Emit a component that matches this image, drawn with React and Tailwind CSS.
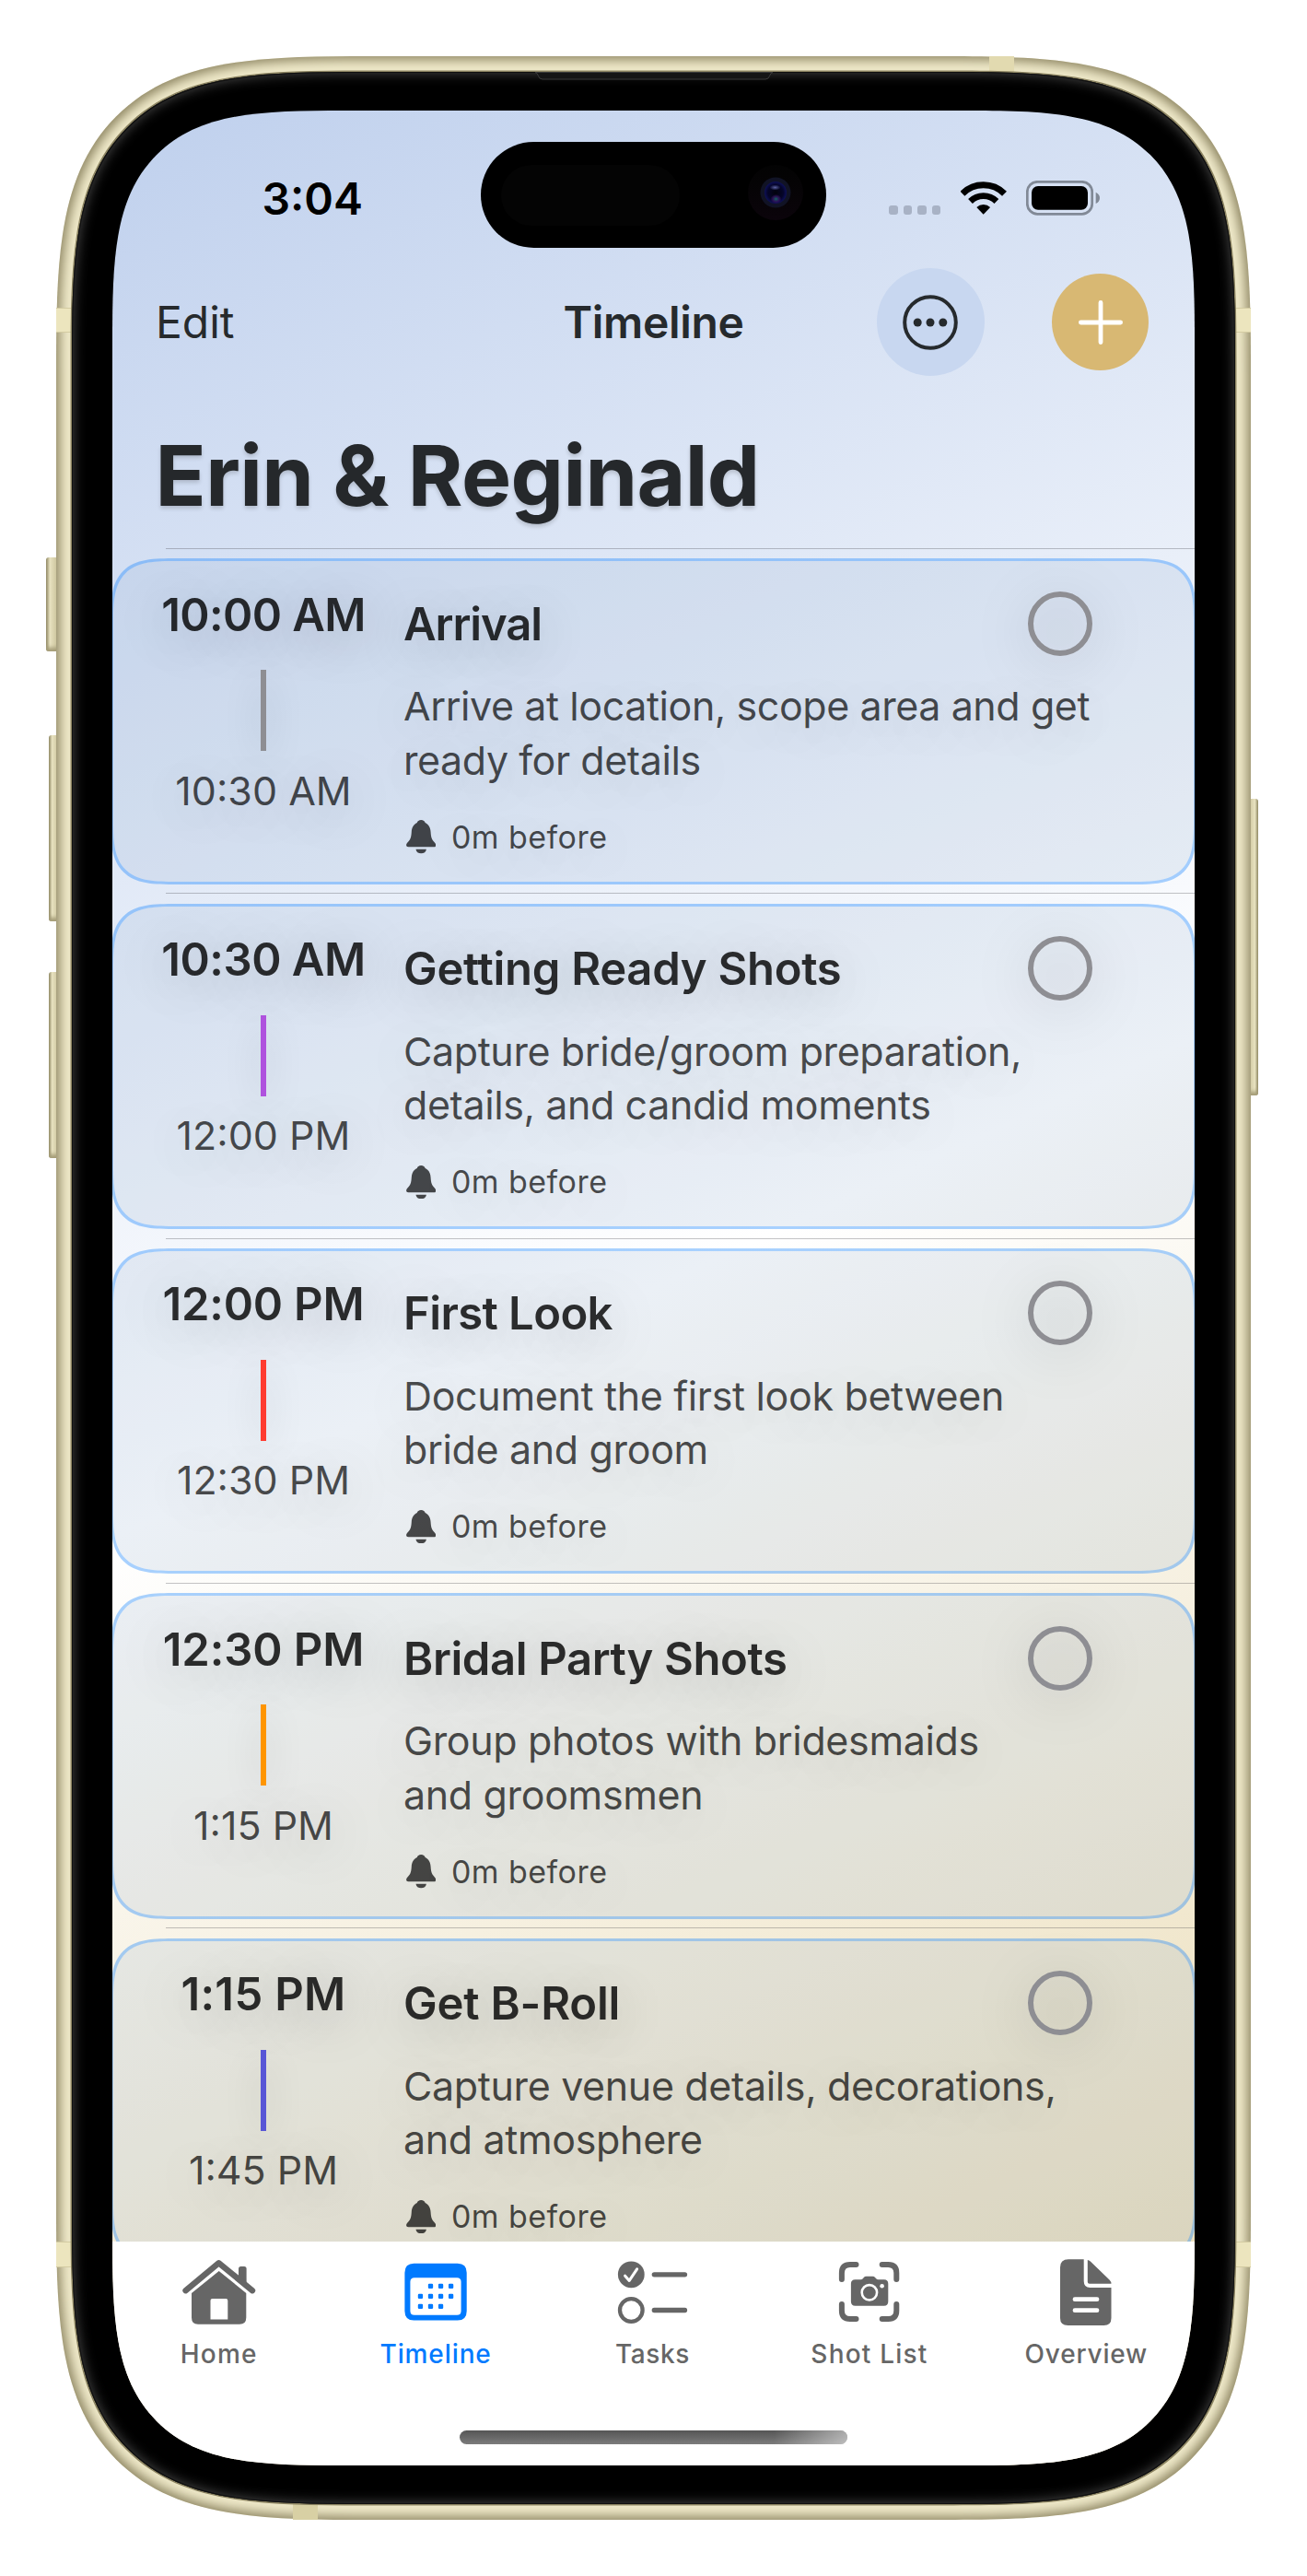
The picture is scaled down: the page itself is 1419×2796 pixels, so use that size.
import React from "react";

const events = [
  {
    start: "10:00 AM",
    startTracking: "tracking-[-0.6px]",
    end: "10:30 AM",
    bar: "bg-[#8e8e93]",
    title: "Arrival",
    titleTracking: "tracking-[-1.1px]",
    text: "Arrive at location, scope area and get\nready for details",
    textTracking: "tracking-[-0.43px]",
  },
  {
    start: "10:30 AM",
    startTracking: "tracking-[-0.5px]",
    end: "12:00 PM",
    bar: "bg-[#af52de]",
    title: "Getting Ready Shots",
    titleTracking: "tracking-[-0.3px]",
    text: "Capture bride/groom preparation,\ndetails, and candid moments",
    textTracking: "tracking-[-0.4px]",
  },
  {
    start: "12:00 PM",
    startTracking: "tracking-[-0.2px]",
    end: "12:30 PM",
    bar: "bg-[#ff3b30]",
    title: "First Look",
    titleTracking: "tracking-[-0.6px]",
    text: "Document the first look between\nbride and groom",
    textTracking: "tracking-[-0.35px]",
  },
  {
    start: "12:30 PM",
    startTracking: "tracking-[-0.1px]",
    end: "1:15 PM",
    bar: "bg-[#ff9500]",
    title: "Bridal Party Shots",
    titleTracking: "tracking-[-0.4px]",
    text: "Group photos with bridesmaids\nand groomsmen",
    textTracking: "tracking-[-0.35px]",
  },
  {
    start: "1:15 PM",
    startTracking: "tracking-[0.3px]",
    end: "1:45 PM",
    bar: "bg-[#5856d6]",
    title: "Get B-Roll",
    titleTracking: "tracking-[-0.2px]",
    text: "Capture venue details, decorations,\nand atmosphere",
    textTracking: "tracking-[-0.36px]",
  },
];

function Bell() {
  return (
    <svg width="32.4" height="36.4" viewBox="0 0 32.4 36.4" fill="currentColor">
      <path d="M16.2 0C18.6 0 20.2 1.4 20.6 3C24.5 4.8 26.3 8.3 26.6 13C26.9 19 28 21.3 30.5 24C32 25.6 32.3 26.5 32.3 27.3C32.3 28.6 31.4 29.3 30 29.3H2.4C1 29.3 .1 28.6 .1 27.3C.1 26.5 .4 25.6 1.9 24C4.4 21.3 5.5 19 5.8 13C6.1 8.3 7.9 4.8 11.8 3C12.2 1.4 13.8 0 16.2 0Z" />
      <path d="M10.5 31.7H21.9C21.5 34.6 19.3 36.3 16.2 36.3S10.9 34.6 10.5 31.7Z" />
    </svg>
  );
}

function HomeIcon() {
  return (
    <svg width="80" height="80" viewBox="0 0 80 80" fill="currentColor">
      <path d="M61 14.5Q61 12 63.5 12H67.1Q69.6 12 69.6 14.5V33L61 25Z" />
      <path d="M3.5 38.2L39.5 8.2L76 38.2" fill="none" stroke="currentColor" strokeWidth="6.4" strokeLinecap="round" strokeLinejoin="round" />
      <path fillRule="evenodd" d="M39.7 17L69.3 41V67.5Q69.3 74.8 62 74.8H17Q10 74.8 10 67.5V41ZM32.5 47Q30.5 47 30.5 49V69.6H49.3V49Q49.3 47 47.3 47Z" />
    </svg>
  );
}

function CalendarIcon() {
  const dots = [
    [1, 0], [2, 0], [3, 0],
    [0, 1], [1, 1], [2, 1], [3, 1],
    [0, 2], [1, 2], [2, 2],
  ];
  return (
    <svg width="80" height="80" viewBox="0 0 80 80" fill="currentColor">
      <path fillRule="evenodd" d="M16.4 8.7H63.7Q73.7 8.7 73.7 18.7V60.5Q73.7 70.5 63.7 70.5H16.4Q6.4 70.5 6.4 60.5V18.7Q6.4 8.7 16.4 8.7ZM16.9 24.3Q12.4 24.3 12.4 28.8V60.2Q12.4 64.7 16.9 64.7H63.1Q67.6 64.7 67.6 60.2V28.8Q67.6 24.3 63.1 24.3Z" />
      {dots.map(([c, r]) => (
        <rect key={`${c}-${r}`} x={20.8 + c * 11.05} y={30.7 + r * 11} width="5.3" height="5.3" rx="1.2" />
      ))}
    </svg>
  );
}

function TasksIcon() {
  return (
    <svg width="80" height="80" viewBox="0 0 80 80" fill="none" stroke="currentColor">
      <circle cx="16.3" cy="20.8" r="14.4" fill="currentColor" stroke="none" />
      <path d="M9.6 22.2L14.2 27.4L22.6 14.8" stroke="#fff" strokeWidth="3" strokeLinecap="round" strokeLinejoin="round" />
      <circle cx="16.3" cy="59.5" r="12.3" strokeWidth="4.3" />
      <path d="M41.3 20.8H74.5M41.3 59.5H74.5" strokeWidth="5.3" strokeLinecap="round" />
    </svg>
  );
}

function ShotIcon() {
  return (
    <svg width="80" height="80" viewBox="0 0 80 80" fill="none">
      <path
        d="M9.9 26V19Q9.9 10 18.9 10H25.5M53.7 10H60.3Q69.3 10 69.3 19V26M69.3 53V60Q69.3 69 60.3 69H53.7M25.5 69H18.9Q9.9 69 9.9 60V53"
        stroke="currentColor"
        strokeWidth="6"
        strokeLinecap="round"
      />
      <path
        d="M24.5 26.3H30.5Q32 26.3 33 25L33.8 24Q34.8 22.7 36.5 22.7H43.4Q45.1 22.7 46.1 24L47 25Q48 26.3 49.5 26.3H55.8Q60.3 26.3 60.3 30.8V50Q60.3 54.7 55.8 54.7H24.5Q19.9 54.7 19.9 50V30.8Q19.9 26.3 24.5 26.3Z"
        fill="currentColor"
      />
      <circle cx="39.9" cy="40.3" r="8.2" stroke="#fff" strokeWidth="2.6" />
      <circle cx="53.6" cy="33.2" r="2.3" fill="#fff" />
    </svg>
  );
}

function DocIcon() {
  return (
    <svg width="80" height="80" viewBox="0 0 80 80" fill="currentColor">
      <path d="M21 4.3H37.7V28Q37.7 35 44.5 35H67.5V68Q67.5 76 59.5 76H20.5Q12 76 12 68V13Q12 4.3 21 4.3Z" />
      <path d="M41.8 5Q43.3 5 44.8 6.5L65.5 26.5Q67.5 28.6 67.5 30.7H43.8Q41.8 30.7 41.8 28.7Z" />
      <path d="M28 47.7H52M28 59.7H52" stroke="#fff" strokeWidth="4.8" strokeLinecap="round" />
    </svg>
  );
}

const tabs = [
  { label: "Home", Icon: HomeIcon, tracking: "tracking-[1.2px]" },
  { label: "Timeline", Icon: CalendarIcon, tracking: "tracking-[0.9px]", active: true },
  { label: "Tasks", Icon: TasksIcon, tracking: "tracking-[0.6px]" },
  { label: "Shot List", Icon: ShotIcon, tracking: "tracking-[1.2px]" },
  { label: "Overview", Icon: DocIcon, tracking: "tracking-[0.8px]" },
];

function StatusBar() {
  return (
    <div className="flex h-[171px] items-start text-black">
      <div className="w-[402px] pt-[71.5px] pl-[164.5px] text-[48px] leading-[48px] font-semibold">3:04</div>
      <div className="mt-[34px] flex h-[115px] w-[375px] items-center justify-between rounded-full bg-black pr-[25px] pl-[22px]">
        <div className="h-[66px] w-[194px] rounded-full bg-[#040404]" />
        <div className="mt-[-5px] flex size-[60px] items-center justify-center rounded-full bg-linear-to-b from-[#030303] to-[#0b040b]">
          <svg width="34" height="34" viewBox="0 0 34 34">
            <defs>
              <radialGradient id="lens">
                <stop offset="0" stopColor="#02020c" />
                <stop offset="0.7" stopColor="#05052a" />
                <stop offset="1" stopColor="#0e1058" />
              </radialGradient>
              <radialGradient id="glintTop">
                <stop offset="0" stopColor="#5a5fa0" />
                <stop offset="1" stopColor="#5a5fa0" stopOpacity="0" />
              </radialGradient>
              <radialGradient id="glintBottom">
                <stop offset="0" stopColor="#0f6a60" />
                <stop offset="0.6" stopColor="#3a1566" stopOpacity="0.7" />
                <stop offset="1" stopColor="#3a1566" stopOpacity="0" />
              </radialGradient>
            </defs>
            <circle cx="17" cy="17" r="16.5" fill="#111325" />
            <circle cx="17" cy="17" r="12" fill="url(#lens)" />
            <ellipse cx="16.5" cy="11.5" rx="6" ry="3" fill="url(#glintTop)" />
            <ellipse cx="17.5" cy="24" rx="6" ry="5" fill="url(#glintBottom)" />
          </svg>
        </div>
      </div>
      <div className="mt-[76px] ml-[68px] flex h-[38px] items-end">
        <div className="mb-[1px] flex gap-[6px]">
          {[0, 1, 2, 3].map((i) => (
            <div key={i} className="h-[9.6px] w-[9.6px] rounded-[3px] bg-[#a8b2c5]" />
          ))}
        </div>
        <svg className="mb-[1px] ml-[22px]" width="49.4" height="36" viewBox="0 0 49.4 36">
          <path d="M1.9 13.2A32.3 32.3 0 0 1 47.5 13.2" fill="none" stroke="#000" strokeWidth="7" />
          <path d="M10.5 21.5A20.2 20.2 0 0 1 38.9 21.5" fill="none" stroke="#000" strokeWidth="6.8" />
          <path d="M17.3 28A10.8 10.8 0 0 1 32.1 28L24.7 35.8Z" fill="#000" />
        </svg>
        <svg className="ml-[21.6px]" width="80" height="38" viewBox="0 0 80 38">
          <rect x="1.3" y="1.3" width="70.4" height="35" rx="11" fill="none" stroke="#818996" strokeWidth="2.7" />
          <rect x="6" y="6" width="61" height="25.7" rx="7" fill="#000" />
          <path d="M75.7 12.7Q80 15 80 18.9T75.7 25Z" fill="#818996" />
        </svg>
      </div>
    </div>
  );
}

function NavBar() {
  return (
    <div className="grid h-[117px] grid-cols-[1fr_auto_1fr] items-center px-[49px] text-[48px] leading-[60px] text-[#262a2d]">
      <div>Edit</div>
      <div className="font-semibold tracking-[-0.35px]">Timeline</div>
      <div className="mr-[3px] flex items-center justify-end gap-[73px]">
        <div className="flex size-[117px] items-center justify-center rounded-full bg-[#c8d7f0] pr-[1px]">
          <svg width="60" height="60" viewBox="0 0 60 60" fill="#262a2d">
            <circle cx="30" cy="30" r="27.8" fill="none" stroke="#262a2d" strokeWidth="4" />
            <circle cx="16.2" cy="30" r="4.5" />
            <circle cx="30" cy="30" r="4.5" />
            <circle cx="43.8" cy="30" r="4.5" />
          </svg>
        </div>
        <div className="flex size-[105px] items-center justify-center rounded-full bg-[#d8b873]">
          <svg width="48" height="48" viewBox="0 0 48 48" stroke="#fff" strokeWidth="4.8" strokeLinecap="round">
            <path d="M24 2.4V45.6M2.4 24H45.6" />
          </svg>
        </div>
      </div>
    </div>
  );
}

function EventRow({ event }) {
  return (
    <li className="h-[374.33px]">
      <div className="ml-[60px] h-px bg-[#3c3c43]/30" />
      <div className="mt-[10.3px] flex h-[353.5px] rounded-[72px] border-[3px] border-[#007aff]/34 bg-[#8aa8c8]/17 bg-clip-padding [corner-shape:superellipse(1.71)]">
        <div className="ml-[43px] flex w-[240px] shrink-0 flex-col items-center pt-[28.5px]">
          <div className={`text-[49px] leading-[60px] font-semibold text-black/81 [text-shadow:0_9px_56px_rgba(0,0,0,0.26)] ${event.startTracking}`}>
            {event.start}
          </div>
          <div className={`mt-[29.5px] h-[88px] w-[6px] shadow-[0_9px_40px_rgba(0,0,0,0.2)] ${event.bar}`} />
          <div className="mt-[16.5px] text-[43px] leading-[52px] text-black/70 [text-shadow:0_9px_56px_rgba(0,0,0,0.23)]">
            {event.end}
          </div>
        </div>
        <div className="ml-[32px] w-[747.5px] pt-[32.5px]">
          <div className="flex h-[70px] justify-between">
            <h2 className={`mt-[6px] text-[49px] leading-[60px] font-semibold text-black/81 [text-shadow:0_9px_56px_rgba(0,0,0,0.26)] ${event.titleTracking}`}>
              {event.title}
            </h2>
            <div className="size-[70px] rounded-full border-[6px] border-[#8e8e93] drop-shadow-[0_9px_26px_rgba(0,0,0,0.25)]" />
          </div>
          <p className={`mt-[25.5px] text-[43px] leading-[58.4px] whitespace-pre text-black/70 [text-shadow:0_9px_56px_rgba(0,0,0,0.2)] ${event.textTracking}`}>
            {event.text}
          </p>
          <div className="mt-[33.5px] flex h-[42px] items-center gap-[16.5px] pl-[3px] text-black/70">
            <Bell />
            <span className="text-[34px] leading-[42px] tracking-[0.45px] [text-shadow:0_9px_50px_rgba(0,0,0,0.2)]">0m before</span>
          </div>
        </div>
      </div>
    </li>
  );
}

function TabBar() {
  return (
    <div className="flex h-[244px] flex-col bg-white">
      <div className="flex w-[1177px]">
        {tabs.map(({ label, Icon, tracking, active }) => (
          <div key={label} className={`flex flex-1 flex-col items-center pt-[15px] ${active ? "text-[#007aff]" : "text-[#666666]"}`}>
            <Icon />
            <span className={`mt-[10px] text-[28px] leading-[34px] font-medium ${tracking}`}>{label}</span>
          </div>
        ))}
      </div>
      <div className="mx-auto mt-[66px] h-[15px] w-[421px] rounded-full bg-linear-to-b from-[#555] to-[#7c7c7c]">
        <div className="ml-auto h-full w-[80px] rounded-r-full bg-linear-to-r from-white/0 to-white/50" />
      </div>
    </div>
  );
}

export default function App() {
  return (
    <div className="relative h-[2796px] w-[1419px] overflow-hidden bg-white p-[61px] font-['Inter',sans-serif]">
      {/* Side buttons */}
      <div className="absolute top-[605px] left-[50px] h-[102px] w-[14px] rounded-[3px] bg-linear-to-r from-[#8f8864] via-[#e8e2c0] via-30% to-[#c4bc93] shadow-[inset_0_-6px_4px_-2px_#a59d78]" />
      <div className="absolute top-[798px] left-[53px] h-[202px] w-[12px] rounded-[3px] bg-linear-to-r from-[#8f8864] via-[#e8e2c0] via-30% to-[#c4bc93] shadow-[inset_0_-6px_4px_-2px_#a59d78]" />
      <div className="absolute top-[1055px] left-[53px] h-[202px] w-[12px] rounded-[3px] bg-linear-to-r from-[#8f8864] via-[#e8e2c0] via-30% to-[#c4bc93] shadow-[inset_0_-6px_4px_-2px_#a59d78]" />
      <div className="absolute top-[867px] left-[1354px] h-[322px] w-[12px] rounded-[3px] bg-linear-to-l from-[#8f8864] via-[#e8e2c0] via-30% to-[#c4bc93] shadow-[inset_0_-6px_4px_-2px_#a59d78]" />

      {/* Metal frame */}
      <div className="relative h-[2674px] w-[1297px] rounded-[342px] bg-[#efe9c9] p-[17px] shadow-[inset_0_0_12px_4px_#8f8764] [corner-shape:superellipse(1.71)]">
        {/* Antenna bands */}
        <div className="absolute top-[273px] left-0 h-[27px] w-full border-y border-[#d3cba2] bg-[#ece5be]" />
        <div className="absolute top-[2372px] left-0 h-[28px] w-full border-y border-[#d3cba2] bg-[#ece5be]" />
        <div className="absolute top-0 left-[1013px] h-[17px] w-[27px] bg-[#e2dab0]" />
        <div className="absolute bottom-0 left-[257px] h-[17px] w-[27px] bg-[#d8d0a4]" />

        {/* Bezel */}
        <div className="relative h-[2640px] w-[1263px] rounded-[316px] bg-black px-[44px] py-[42px] shadow-[0_0_0_1.5px_#8d8562,inset_0_0_0_1px_#101010,inset_0_0_14px_1px_#4a4a4a] [corner-shape:superellipse(1.71)]">
          <svg className="absolute top-0 left-[503px]" width="258" height="9" viewBox="0 0 258 9">
            <path d="M0 .5Q2.5 1 3.5 4.5Q4.5 8 8 8H250Q253.5 8 254.5 4.5Q255.5 1 258 .5Z" fill="#151515" stroke="#3a3a3a" strokeWidth="1" />
          </svg>
          <div className="h-[2556px] w-[1175px] overflow-hidden rounded-[252px] bg-black [corner-shape:superellipse(1.71)]">
            <div className="-ml-[2px] flex h-[2556px] w-[1179px] flex-col bg-[linear-gradient(155.2deg,#bfd0ed_0%,#ffffff_50%,#e8d9b0_100%)]">
              <header className="h-[475px] shrink-0">
                <StatusBar />
                <NavBar />
                <h1 className="mt-[53px] pl-[48.5px] text-[91px] leading-[110px] font-bold tracking-[-0.6px] text-[#25282b] [text-shadow:0_3px_4px_rgba(0,0,0,0.16)]">
                  Erin &amp; Reginald
                </h1>
              </header>
              <ul className="h-[1837.5px] shrink-0 overflow-hidden">
                {events.map((event) => (
                  <EventRow key={event.title} event={event} />
                ))}
              </ul>
              <TabBar />
            </div>
          </div>
        </div>
      </div>
    </div>
  );
}
